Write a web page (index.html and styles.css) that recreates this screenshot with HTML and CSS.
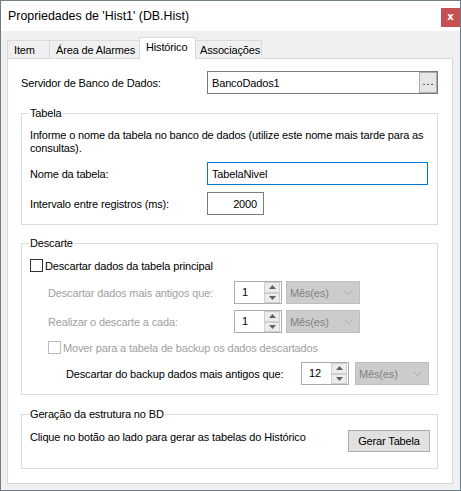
FILE: index.html
```html
<!DOCTYPE html>
<html lang="pt-BR">
<head>
<meta charset="utf-8">
<title>Propriedades de 'Hist1' (DB.Hist)</title>
<link rel="stylesheet" href="styles.css">
</head>
<body>
<div class="window">
  <div class="titlebar">
    <span class="title">Propriedades de 'Hist1' (DB.Hist)</span>
    <div class="close">x</div>
  </div>
  <div class="client">
    <div class="tabs">
      <div class="tab t-item">Item</div>
      <div class="tab t-area">Área de Alarmes</div>
      <div class="tab t-hist active">Histórico</div>
      <div class="tab t-assoc">Associações</div>
    </div>
    <div class="panel">
      <div class="row server-row">
        <span class="label l-server">Servidor de Banco de Dados:</span>
        <div class="input server-input"><span class="val">BancoDados1</span><span class="dots">...</span></div>
      </div>

      <fieldset class="group g-tabela">
        <legend>Tabela</legend>
        <p class="info">Informe o nome da tabela no banco de dados (utilize este nome mais tarde para as<br>consultas).</p>
        <div class="row r-nome">
          <span class="label l-field">Nome da tabela:</span>
          <div class="input focus nome-input"><span class="val">TabelaNivel</span></div>
        </div>
        <div class="row r-int">
          <span class="label l-field">Intervalo entre registros (ms):</span>
          <div class="input int-input"><span class="val">2000</span></div>
        </div>
      </fieldset>

      <fieldset class="group g-descarte">
        <legend>Descarte</legend>
        <div class="row r-check1">
          <span class="checkbox"></span>
          <span class="check-label">Descartar dados da tabela principal</span>
        </div>
        <div class="row r-sub r-d1">
          <span class="label disabled l-sub">Descartar dados mais antigos que:</span>
          <div class="spin">
            <span class="spin-val">1</span>
            <div class="spin-btns">
              <span class="sb"><svg width="7" height="4" viewBox="0 0 7 4"><path d="M0 4 L3.5 0 L7 4 Z" fill="#606060"/></svg></span>
              <span class="sb"><svg width="7" height="4" viewBox="0 0 7 4"><path d="M0 0 L3.5 4 L7 0 Z" fill="#606060"/></svg></span>
            </div>
          </div>
          <div class="combo"><span>Mês(es)</span><svg width="9" height="5" viewBox="0 0 9 5"><polyline points="0.5,0.5 4.5,4.5 8.5,0.5" fill="none" stroke="#a9a9a9" stroke-width="1"/></svg></div>
        </div>
        <div class="row r-sub r-d2">
          <span class="label disabled l-sub">Realizar o descarte a cada:</span>
          <div class="spin">
            <span class="spin-val">1</span>
            <div class="spin-btns">
              <span class="sb"><svg width="7" height="4" viewBox="0 0 7 4"><path d="M0 4 L3.5 0 L7 4 Z" fill="#606060"/></svg></span>
              <span class="sb"><svg width="7" height="4" viewBox="0 0 7 4"><path d="M0 0 L3.5 4 L7 0 Z" fill="#606060"/></svg></span>
            </div>
          </div>
          <div class="combo"><span>Mês(es)</span><svg width="9" height="5" viewBox="0 0 9 5"><polyline points="0.5,0.5 4.5,4.5 8.5,0.5" fill="none" stroke="#a9a9a9" stroke-width="1"/></svg></div>
        </div>
        <div class="row r-sub r-check2">
          <span class="checkbox disabled-box"></span>
          <span class="check-label disabled">Mover para a tabela de backup os dados descartados</span>
        </div>
        <div class="row r-backup">
          <span class="label l-backup">Descartar do backup dados mais antigos que:</span>
          <div class="spin">
            <span class="spin-val">12</span>
            <div class="spin-btns">
              <span class="sb"><svg width="7" height="4" viewBox="0 0 7 4"><path d="M0 4 L3.5 0 L7 4 Z" fill="#606060"/></svg></span>
              <span class="sb"><svg width="7" height="4" viewBox="0 0 7 4"><path d="M0 0 L3.5 4 L7 0 Z" fill="#606060"/></svg></span>
            </div>
          </div>
          <div class="combo combo-wide"><span>Mês(es)</span><svg width="9" height="5" viewBox="0 0 9 5"><polyline points="0.5,0.5 4.5,4.5 8.5,0.5" fill="none" stroke="#a9a9a9" stroke-width="1"/></svg></div>
        </div>
      </fieldset>

      <fieldset class="group g-geracao">
        <legend>Geração da estrutura no BD</legend>
        <div class="row r-gerar">
          <span class="gerar-text">Clique no botão ao lado para gerar as tabelas do Histórico</span>
          <div class="button">Gerar Tabela</div>
        </div>
      </fieldset>
    </div>
  </div>
</div>
</body>
</html>
```

FILE: styles.css
```css
* { box-sizing: border-box; }
html, body { margin: 0; padding: 0; background: #ffffff; }
body {
  font-family: "Liberation Sans", "Noto Sans", sans-serif;
  font-size: 11px;
  letter-spacing: -0.15px;
  color: #000000;
}

.window {
  width: 461px;
  height: 491px;
  border: 1px solid #6f7d87;
  display: flex;
  flex-direction: column;
  background: #f0f0f0;
}

.titlebar {
  height: 30px;
  background: #ffffff;
  display: flex;
  align-items: flex-start;
  justify-content: space-between;
  flex: none;
}
.title {
  margin: 8px 0 0 7px;
  font-size: 12.4px;
  letter-spacing: 0;
  line-height: 15px;
  white-space: nowrap;
}
.close {
  width: 19px;
  height: 19px;
  margin-top: 7px;
  background: #c75050;
  color: #ffffff;
  font-family: "DejaVu Sans", sans-serif;
  font-weight: bold;
  font-size: 10px;
  line-height: 17px;
  letter-spacing: 0;
  text-align: center;
}

.client {
  flex: 1;
  padding: 6px 0 0 6px;
  display: flex;
  flex-direction: column;
}

.tabs {
  display: flex;
  align-items: flex-end;
  height: 21px;
  flex: none;
}
.tab {
  height: 18px;
  border: 1px solid #d9d9d9;
  border-bottom: none;
  margin-right: -1px;
  background: #f0f0f0;
  padding-left: 6px;
  line-height: 19px;
  white-space: nowrap;
}
.tab.active {
  height: 22px;
  margin-bottom: -1px;
  background: #ffffff;
  line-height: 19px;
  position: relative;
  z-index: 1;
}
.t-item { width: 43px; }
.t-area { width: 91px; }
.t-hist { width: 57px; }
.t-assoc { width: 67px; padding-left: 4px; }

.panel {
  width: 446px;
  height: 426px;
  background: #ffffff;
  border: 1px solid #d9d9d9;
  padding: 12px 14px 0 13px;
}

.row {
  display: flex;
  align-items: center;
}
.label { white-space: nowrap; flex: none; }
.l-server { width: 186px; }
.l-field { width: 177px; }
.l-sub { width: 186px; }
.l-backup { width: 235px; }

.input {
  height: 23px;
  border: 1px solid #7a7a7a;
  background: #ffffff;
  display: flex;
  align-items: center;
}
.input .val { flex: 1; padding-left: 4px; white-space: nowrap; }
.server-input { width: 231px; align-items: stretch; }
.server-input .val { display: flex; align-items: center; }
.dots {
  width: 18px;
  background: #e6e6e6;
  border: 1px solid #adadad;
  text-align: center;
  line-height: 17px;
  letter-spacing: 1px;
  padding-left: 1px;
}
.input.focus { border-color: #0078d7; }
.nome-input { width: 221px; }
.int-input { width: 57px; }
.int-input .val { text-align: right; padding-right: 6px; }

.group {
  margin: 0;
  border: 1px solid #dcdcdc;
  padding: 0 7px 0 8px;
  min-width: 0;
}
.group legend {
  padding: 0 1px;
  margin-left: -1px;
  line-height: 15px;
}

.g-tabela { margin-top: 12px; padding-bottom: 9px; }
.info {
  margin: 8px 0 0 0;
  line-height: 13px;
  white-space: nowrap;
}
.r-nome { margin-top: 7px; }
.r-int { margin-top: 7px; }

.g-descarte { margin-top: 11px; padding-bottom: 9px; }
.r-check1 { margin-top: 6px; height: 17px; }
.checkbox {
  width: 13px;
  height: 13px;
  border: 1px solid #333333;
  background: #ffffff;
  flex: none;
}
.checkbox.disabled-box { border-color: #bcbcbc; }
.check-label { margin-left: 2px; white-space: nowrap; }
.disabled { color: #a0a0a0; }
.r-sub { padding-left: 18px; }
.r-d1 { margin-top: 7px; }
.r-d2 { margin-top: 6px; }
.r-check2 { margin-top: 6px; height: 17px; }
.r-backup { margin-top: 6px; padding-left: 36px; }

.spin {
  width: 48px;
  height: 23px;
  border: 1px solid #acacac;
  background: #ffffff;
  display: flex;
  flex: none;
}
.spin-val { flex: 1; padding-left: 7px; line-height: 21px; }
.spin-btns {
  width: 17px;
  display: flex;
  flex-direction: column;
  padding: 0 1px 0 0;
}
.sb {
  flex: 1;
  border: 1px solid #cfcfcf;
  background: #ececec;
  display: flex;
  align-items: center;
  justify-content: center;
}
.combo {
  width: 74px;
  height: 23px;
  margin-left: 4px;
  background: #cccccc;
  border: 1px solid #bfbfbf;
  color: #838383;
  display: flex;
  align-items: center;
  justify-content: space-between;
  padding: 0 6px 0 3px;
}
.combo-wide { margin-left: 6px; }

.g-geracao { margin-top: 12px; padding-bottom: 16px; }
.r-gerar { margin-top: 8px; justify-content: space-between; align-items: flex-start; }
.gerar-text { white-space: nowrap; margin-top: 1px; }
.button {
  width: 82px;
  height: 22px;
  background: #e1e1e1;
  border: 1px solid #adadad;
  text-align: center;
  line-height: 20px;
}
```
